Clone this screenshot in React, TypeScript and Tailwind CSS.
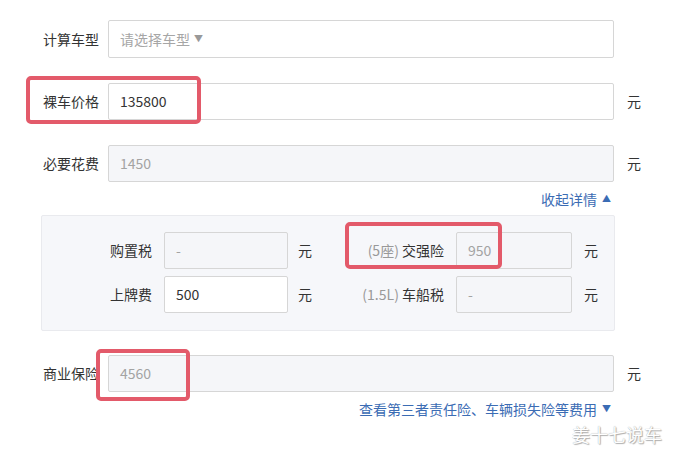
import React from 'react';

const font = { fontFamily: '"Noto Sans CJK SC", "Noto Sans", sans-serif' };

const Field = ({ value, muted, disabled, w }: { value: string; muted?: boolean; disabled?: boolean; w: string }) => (
    <div
        className={`${w} h-[37px] flex items-center pl-[11px] border border-[#d6d6d6] rounded-[2px] text-[14px] ${disabled ? 'bg-[#f5f6f9]' : 'bg-white'} ${muted ? 'text-[#a3a3a3]' : 'text-[#333]'}`}
    >
        {value}
    </div>
);

const MainRow = ({ label, children, unit = true, mt }: { label: string; children: React.ReactNode; unit?: boolean; mt: string }) => (
    <div className={`flex items-center ${mt}`}>
        <div className="w-[100px] text-right text-[14px] text-[#333] pr-[1px]">{label}</div>
        <div className="ml-[8px]">{children}</div>
        {unit && <div className="ml-[13px] text-[14px] text-[#333]">元</div>}
    </div>
);

const App = () => {
    return (
        <div className="relative w-[676px] h-[454px] bg-white overflow-hidden" style={font}>
            <div className="flex flex-col pt-[20px]">
                <MainRow label="计算车型" unit={false} mt="">
                    <div className="w-[506px] h-[38px] flex items-center pl-[11px] border border-[#d6d6d6] rounded-[2px] text-[14px] text-[#a6a6a6]">
                        请选择车型
                        <span className="ml-[4px] text-[9px] text-[#999]">▼</span>
                    </div>
                </MainRow>
                <MainRow label="裸车价格" mt="mt-[25px]">
                    <Field value="135800" w="w-[506px]" />
                </MainRow>
                <MainRow label="必要花费" mt="mt-[25px]">
                    <Field value="1450" muted disabled w="w-[506px]" />
                </MainRow>

                <div className="w-[615px] flex justify-end items-center mt-[7px] h-[20px] text-[14px] text-[#3b6cb4] pr-[4px]">
                    收起详情<span className="ml-[5px] text-[9px]">▲</span>
                </div>

                <div className="ml-[41px] mt-[6px] w-[574px] h-[116px] bg-[#f6f7fa] border border-[#e9eaee] rounded-[2px] flex flex-col pt-[16px] gap-[7px]">
                    <div className="flex items-center text-[14px] text-[#333]">
                        <div className="w-[110px] text-right">购置税</div>
                        <div className="ml-[12px]"><Field value="-" muted disabled w="w-[124px]" /></div>
                        <div className="ml-[10px] w-[14px]">元</div>
                        <div className="w-[132px] text-right"><span className="text-[#999]">(5座)</span> 交强险</div>
                        <div className="ml-[12px]"><Field value="950" muted disabled w="w-[116px]" /></div>
                        <div className="ml-[12px]">元</div>
                    </div>
                    <div className="flex items-center text-[14px] text-[#333]">
                        <div className="w-[110px] text-right">上牌费</div>
                        <div className="ml-[12px]"><Field value="500" w="w-[124px]" /></div>
                        <div className="ml-[10px] w-[14px]">元</div>
                        <div className="w-[132px] text-right"><span className="text-[#999]">(1.5L)</span> 车船税</div>
                        <div className="ml-[12px]"><Field value="-" muted disabled w="w-[116px]" /></div>
                        <div className="ml-[12px]">元</div>
                    </div>
                </div>

                <MainRow label="商业保险" mt="mt-[24px]">
                    <Field value="4560" muted disabled w="w-[506px]" />
                </MainRow>

                <div className="w-[615px] flex justify-end items-center mt-[7px] h-[20px] text-[14px] text-[#3b6cb4] pr-[4px]">
                    查看第三者责任险、车辆损失险等费用<span className="ml-[5px] text-[9px]">▼</span>
                </div>
            </div>

            {/* red highlight marks */}
            <div className="absolute left-[26px] top-[76px] w-[175px] h-[48px] border-[4px] border-[#e35a6a] rounded-[5px]" />
            <div className="absolute left-[345px] top-[222px] w-[157px] h-[47px] border-[4px] border-[#e35a6a] rounded-[5px]" />
            <div className="absolute left-[96px] top-[349px] w-[94px] h-[52px] border-[4px] border-[#e35a6a] rounded-[5px]" />

            {/* watermark */}
            <div
                className="absolute left-[572px] top-[421px] text-[18px] text-white"
                style={{ textShadow: '0 0 1px #9a9a9a, 1px 1px 1px #b0b0b0' }}
            >
                姜十七说车
            </div>
        </div>
    );
};

export default App;
